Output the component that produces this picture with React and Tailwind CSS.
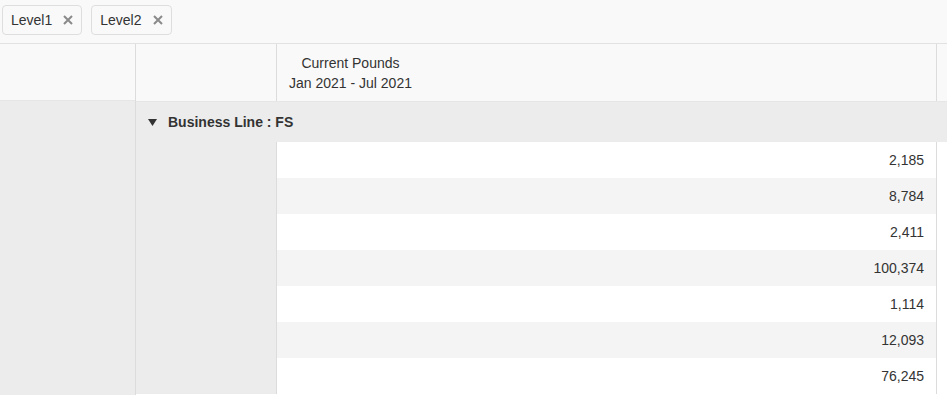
const rows = ["2,185", "8,784", "2,411", "100,374", "1,114", "12,093", "76,245"];

const Chip = ({ label }) => (
  <div className="flex items-center h-[30px] pl-[8px] pr-[8px] border border-[#dedede] rounded-sm bg-[#f9f9f9] text-[14px] text-[#333]">
    <span>{label}</span>
    <svg className="ml-[11px]" width="10" height="10" viewBox="0 0 10 10">
      <path d="M1 1L9 9M9 1L1 9" stroke="#8a8a8a" strokeWidth="2" />
    </svg>
  </div>
);

const App = () => {
  return (
    <div className="w-[947px] h-[395px] overflow-hidden bg-white text-[#333] font-['Liberation_Sans',Arial,sans-serif]">
      <div className="h-[44px] bg-[#f9f9f9] flex items-start gap-[9px] pt-[5px] pl-[2px] border-b border-[#e2e2e2]">
        <Chip label="Level1" />
        <Chip label="Level2" />
      </div>

      <div className="flex h-[351px]">
        <div className="w-[136px] shrink-0 border-r border-[#dcdcdc] flex flex-col">
          <div className="h-[57px] bg-[#f9f9f9] border-b border-[#e6e6e6]" />
          <div className="flex-1 bg-[#ececec]" />
        </div>

        <div className="flex-1 flex flex-col">
          <div className="flex h-[58px] bg-[#f9f9f9] border-b border-[#e6e6e6]">
            <div className="w-[141px] border-r border-[#dcdcdc]" />
            <div className="w-[660px] border-r border-[#dcdcdc] pl-[12px] pt-[9px] text-[14px] leading-[20px]">
              <div className="inline-block text-center">
                <div>Current Pounds</div>
                <div>Jan 2021 - Jul 2021</div>
              </div>
            </div>
            <div className="flex-1" />
          </div>

          <div className="h-[40px] bg-[#ececec] flex items-center pl-[12px] text-[14px] font-bold">
            <svg className="mr-[11px]" width="9" height="7" viewBox="0 0 9 7">
              <path d="M0 0H9L4.5 7Z" fill="#333" />
            </svg>
            <span>Business Line : FS</span>
          </div>

          {rows.map((v, i) => (
            <div key={i} className="flex h-[36px]">
              <div className="w-[141px] bg-[#ececec] border-r border-[#dcdcdc]" />
              <div
                className={
                  "w-[660px] border-r border-[#dcdcdc] flex items-center justify-end pr-[12px] text-[14px] " +
                  (i % 2 === 0 ? "bg-white" : "bg-[#f4f4f4]")
                }
              >
                {v}
              </div>
              <div className="flex-1 bg-white" />
            </div>
          ))}
        </div>
      </div>
    </div>
  );
};

export default App;
